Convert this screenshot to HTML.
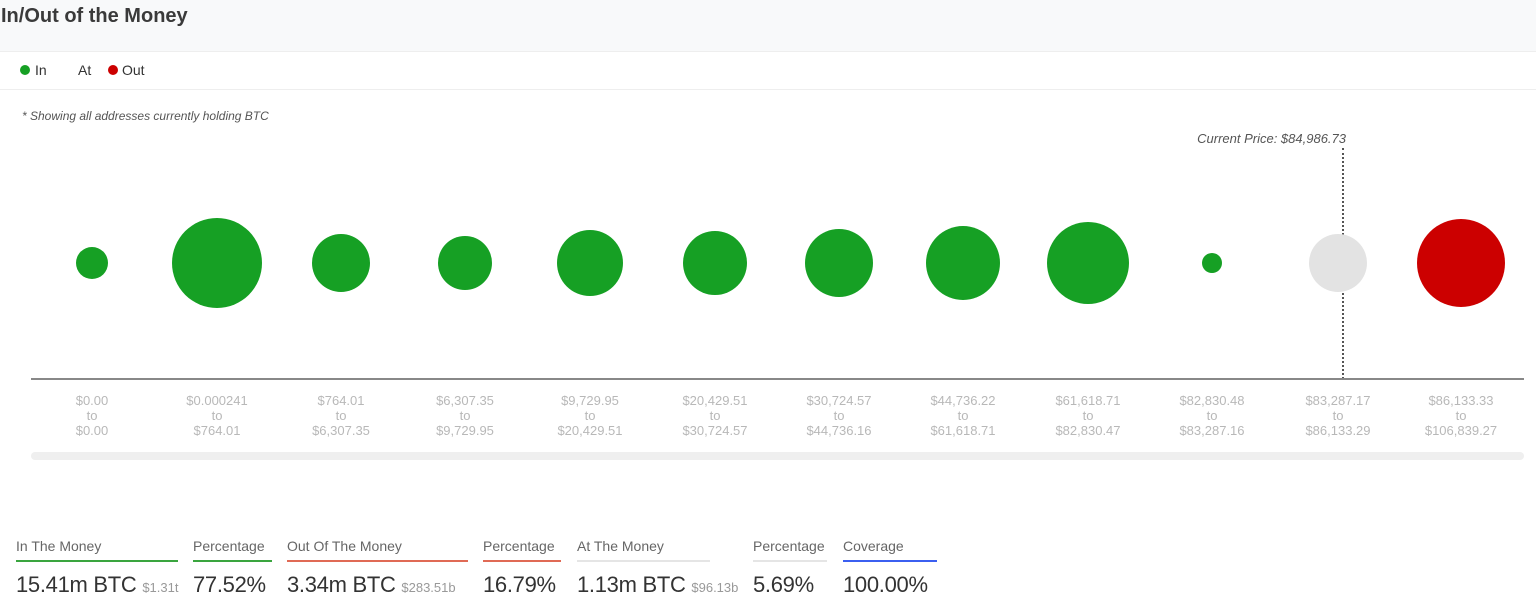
<!DOCTYPE html>
<html><head><style>
body{margin:0;width:1536px;height:612px;background:#fff;font-family:"Liberation Sans",sans-serif;position:relative;overflow:hidden}
.a{position:absolute}
.c{position:absolute;border-radius:50%;background:#16a024}
.l{position:absolute;top:393px;width:120px;text-align:center;color:#b8b8b8;font-size:13px;line-height:15px}
.s{position:absolute;top:538px;color:#666;font-size:14px;padding-bottom:6px}
.v{position:absolute;top:572px;color:#333;font-size:22px;white-space:nowrap;letter-spacing:-0.3px}
.v small{font-size:13px;color:#999;letter-spacing:0}
</style></head><body>
<div class="a" style="left:0;top:0;width:1536px;height:51px;background:#f8f9fa"></div>
<div class="a" style="left:1px;top:5px;font-size:20px;font-weight:bold;color:#3a3a3a">In/Out of the Money</div>
<div class="a" style="left:0;top:51px;width:1536px;height:1px;background:#eee"></div>
<div class="a" style="left:0;top:89px;width:1536px;height:1px;background:#eee"></div>
<div class="a" style="left:20px;top:65px;width:10px;height:10px;border-radius:50%;background:#16a024"></div>
<div class="a" style="left:35px;top:62px;font-size:14px;color:#333">In</div>
<div class="a" style="left:78px;top:62px;font-size:14px;color:#333">At</div>
<div class="a" style="left:108px;top:65px;width:10px;height:10px;border-radius:50%;background:#cc0000"></div>
<div class="a" style="left:122px;top:62px;font-size:14px;color:#333">Out</div>
<div class="a" style="left:22px;top:109px;font-size:12px;font-style:italic;color:#555">* Showing all addresses currently holding BTC</div>
<div class="a" style="left:1100px;width:246px;text-align:right;top:131px;font-size:13px;font-style:italic;color:#555">Current Price: $84,986.73</div>
<div class="a" style="left:1342px;top:148px;height:231px;border-left:2px dotted #555"></div>
<div class="c" style="left:76px;top:247px;width:32px;height:32px"></div>
<div class="c" style="left:172px;top:218px;width:90px;height:90px"></div>
<div class="c" style="left:312px;top:234px;width:58px;height:58px"></div>
<div class="c" style="left:438px;top:236px;width:54px;height:54px"></div>
<div class="c" style="left:557px;top:230px;width:66px;height:66px"></div>
<div class="c" style="left:683px;top:231px;width:64px;height:64px"></div>
<div class="c" style="left:805px;top:229px;width:68px;height:68px"></div>
<div class="c" style="left:926px;top:226px;width:74px;height:74px"></div>
<div class="c" style="left:1047px;top:222px;width:82px;height:82px"></div>
<div class="c" style="left:1202px;top:253px;width:20px;height:20px"></div>
<div class="c" style="left:1309px;top:234px;width:58px;height:58px;background:#e3e3e3"></div>
<div class="c" style="left:1417px;top:219px;width:88px;height:88px;background:#cc0000"></div>
<div class="a" style="left:31px;top:378px;width:1493px;height:2px;background:#888"></div>
<div class="l" style="left:32px">$0.00<br>to<br>$0.00</div>
<div class="l" style="left:157px">$0.000241<br>to<br>$764.01</div>
<div class="l" style="left:281px">$764.01<br>to<br>$6,307.35</div>
<div class="l" style="left:405px">$6,307.35<br>to<br>$9,729.95</div>
<div class="l" style="left:530px">$9,729.95<br>to<br>$20,429.51</div>
<div class="l" style="left:655px">$20,429.51<br>to<br>$30,724.57</div>
<div class="l" style="left:779px">$30,724.57<br>to<br>$44,736.16</div>
<div class="l" style="left:903px">$44,736.22<br>to<br>$61,618.71</div>
<div class="l" style="left:1028px">$61,618.71<br>to<br>$82,830.47</div>
<div class="l" style="left:1152px">$82,830.48<br>to<br>$83,287.16</div>
<div class="l" style="left:1278px">$83,287.17<br>to<br>$86,133.29</div>
<div class="l" style="left:1401px">$86,133.33<br>to<br>$106,839.27</div>
<div class="a" style="left:31px;top:452px;width:1493px;height:8px;border-radius:4px;background:#efefef"></div>
<div class="s" style="left:16px;width:162px;border-bottom:2px solid #3aa53f">In The Money</div>
<div class="s" style="left:193px;width:79px;border-bottom:2px solid #3aa53f">Percentage</div>
<div class="s" style="left:287px;width:181px;border-bottom:2px solid #e06a55">Out Of The Money</div>
<div class="s" style="left:483px;width:78px;border-bottom:2px solid #e06a55">Percentage</div>
<div class="s" style="left:577px;width:133px;border-bottom:2px solid #e5e5e5">At The Money</div>
<div class="s" style="left:753px;width:74px;border-bottom:2px solid #e5e5e5">Percentage</div>
<div class="s" style="left:843px;width:94px;border-bottom:2px solid #3b5ff0">Coverage</div>
<div class="v" style="left:16px">15.41m BTC <small>$1.31t</small></div>
<div class="v" style="left:193px">77.52%</div>
<div class="v" style="left:287px">3.34m BTC <small>$283.51b</small></div>
<div class="v" style="left:483px">16.79%</div>
<div class="v" style="left:577px">1.13m BTC <small>$96.13b</small></div>
<div class="v" style="left:753px">5.69%</div>
<div class="v" style="left:843px">100.00%</div>
</body></html>
